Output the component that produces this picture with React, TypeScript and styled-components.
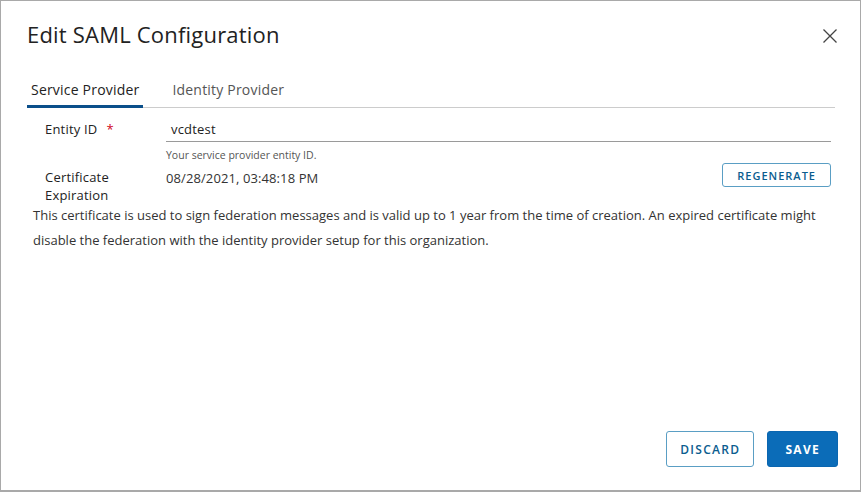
import React from "react";
import styled, { createGlobalStyle } from "styled-components";

const Global = createGlobalStyle`
  html, body { margin: 0; padding: 0; background: #fff; }
  body { font-family: "Open Sans", "Noto Sans", sans-serif; color: #333; }
  * { box-sizing: border-box; }
`;

const Frame = styled.div`
  width: 861px;
  height: 492px;
  border: 1px solid #a9a9a9;
  border-bottom-width: 2px;
  display: flex;
  flex-direction: column;
  padding: 20px 22px 23px 26px;
  background: #fff;
`;

const Header = styled.div`
  display: flex;
  align-items: center;
  justify-content: space-between;
  height: 30px;
`;

const Title = styled.h1`
  margin: 0 0 4px 0;
  font-size: 22px;
  line-height: 28px;
  font-weight: 400;
  color: #222;
  letter-spacing: 0.2px;
`;

const Close = styled.button`
  border: 0;
  background: none;
  padding: 0;
  width: 16px;
  height: 16px;
  display: flex;
  cursor: pointer;
`;

const Tabs = styled.div`
  display: flex;
  margin-top: 30px;
  margin-right: 3px;
  border-bottom: 1px solid #cccccc;
  gap: 25px;
`;

const Tab = styled.div<{ $active?: boolean }>`
  font-size: 14px;
  line-height: 18px;
  padding: 0 4px 6px 4px;
  margin-bottom: -1px;
  letter-spacing: 0.2px;
  color: ${(p) => (p.$active ? "#222" : "#555")};
  border-bottom: 3px solid ${(p) => (p.$active ? "#0b4f8a" : "transparent")};
`;

const Body = styled.div`
  flex: 1;
  padding: 12px 0 0 0;
`;

const FieldRow = styled.div`
  display: grid;
  grid-template-columns: 121px 1fr;
  padding-left: 18px;
`;

const Label = styled.div`
  font-size: 13px;
  color: #222;
  line-height: 18px;
  letter-spacing: 0.2px;
`;

const Required = styled.span`
  color: #d0021b;
  margin-left: 9px;
`;

const InputWrap = styled.div`
  margin-right: 7px;
`;

const Input = styled.div`
  font-size: 13px;
  color: #222;
  padding: 0 0 3px 5px;
  border-bottom: 1px solid #9a9a9a;
  line-height: 18px;
  letter-spacing: 0.2px;
`;

const Helper = styled.div`
  font-size: 10.5px;
  color: #555;
  margin-top: 6px;
`;

const CertRow = styled(FieldRow)`
  margin-top: 6px;
  align-items: start;
`;

const CertValue = styled.div`
  display: flex;
  justify-content: space-between;
  align-items: flex-start;
  margin-right: 7px;
`;

const Value = styled.div`
  font-size: 13px;
  line-height: 18px;
  color: #333;
  margin-top: 1px;
  letter-spacing: 0.1px;
`;

const Regenerate = styled.button`
  font-family: inherit;
  height: 24px;
  margin-top: -5px;
  padding: 0 14px;
  border: 1px solid #5a9ec4;
  border-radius: 3px;
  background: #fff;
  color: #0b5d8f;
  font-size: 11px;
  font-weight: 600;
  letter-spacing: 1px;
`;

const Paragraph = styled.p`
  margin: -1px 0 0 6px;
  font-size: 13px;
  line-height: 25px;
  color: #333;
`;

const Footer = styled.div`
  display: flex;
  justify-content: flex-end;
  gap: 13px;
`;

const Btn = styled.button<{ $primary?: boolean }>`
  font-family: inherit;
  height: 36px;
  padding: 0 ${(p) => (p.$primary ? "17px" : "13px")};
  border-radius: 3px;
  border: 1px solid ${(p) => (p.$primary ? "#0a66b0" : "#5a9ec4")};
  background: ${(p) => (p.$primary ? "#0b6cb8" : "#fff")};
  color: ${(p) => (p.$primary ? "#fff" : "#0b5d8f")};
  font-size: 12px;
  font-weight: ${(p) => (p.$primary ? 700 : 600)};
  letter-spacing: 1.3px;
`;

export default function App() {
  return (
    <>
      <Global />
      <Frame>
        <Header>
          <Title>Edit SAML Configuration</Title>
          <Close aria-label="Close">
            <svg width="16" height="16" viewBox="0 0 16 16">
              <path d="M1.5 1.5 L14.5 14.5 M14.5 1.5 L1.5 14.5" stroke="#444" strokeWidth="1.3" fill="none" />
            </svg>
          </Close>
        </Header>
        <Tabs>
          <Tab $active>Service Provider</Tab>
          <Tab>Identity Provider</Tab>
        </Tabs>
        <Body>
          <FieldRow>
            <Label>
              Entity ID<Required>*</Required>
            </Label>
            <InputWrap>
              <Input>vcdtest</Input>
              <Helper>Your service provider entity ID.</Helper>
            </InputWrap>
          </FieldRow>
          <CertRow>
            <Label>
              Certificate
              <br />
              Expiration
            </Label>
            <CertValue>
              <Value>08/28/2021, 03:48:18 PM</Value>
              <Regenerate>REGENERATE</Regenerate>
            </CertValue>
          </CertRow>
          <Paragraph>
            This certificate is used to sign federation messages and is valid up to 1 year from the time of creation. An expired certificate might disable the federation with the identity provider setup for this organization.
          </Paragraph>
        </Body>
        <Footer>
          <Btn>DISCARD</Btn>
          <Btn $primary>SAVE</Btn>
        </Footer>
      </Frame>
    </>
  );
}
